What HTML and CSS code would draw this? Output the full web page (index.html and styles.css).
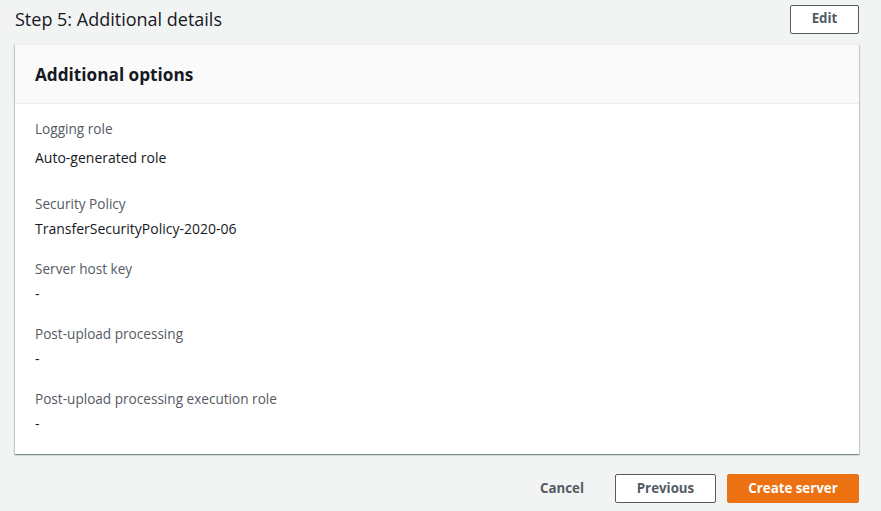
FILE: index.html
```html
<!DOCTYPE html>
<html>
<head>
<meta charset="utf-8">
<link rel="stylesheet" href="styles.css">
</head>
<body>
<div class="page">
  <div class="step-head">
    <h2 class="step-title">Step 5: Additional details</h2>
    <button class="btn btn-normal">Edit</button>
  </div>
  <div class="card">
    <div class="card-header"><h3>Additional options</h3></div>
    <div class="card-body">
      <div class="field first">
        <div class="label">Logging role</div>
        <div class="value v-first">Auto-generated role</div>
      </div>
      <div class="field second">
        <div class="label">Security Policy</div>
        <div class="value">TransferSecurityPolicy-2020-06</div>
      </div>
      <div class="field">
        <div class="label">Server host key</div>
        <div class="value">-</div>
      </div>
      <div class="field">
        <div class="label">Post-upload processing</div>
        <div class="value">-</div>
      </div>
      <div class="field">
        <div class="label">Post-upload processing execution role</div>
        <div class="value">-</div>
      </div>
    </div>
  </div>
  <div class="actions">
    <button class="btn btn-link">Cancel</button>
    <button class="btn btn-normal btn-prev">Previous</button>
    <button class="btn btn-primary">Create server</button>
  </div>
</div>
</body>
</html>
```
FILE: styles.css
```css
html, body {
  margin: 0;
  padding: 0;
  background: #f2f3f3;
  font-family: "Open Sans", "Noto Sans", sans-serif;
  color: #16191f;
}
.page {
  padding: 0 22px 0 15px;
}
.step-head {
  display: flex;
  justify-content: space-between;
  align-items: center;
  height: 38px;
}
.step-title {
  margin: 0;
  font-size: 18px;
  font-weight: 400;
  color: #16191f;
  line-height: 24px;
}
.btn {
  font-family: inherit;
  font-size: 13.3px;
  font-weight: 700;
  border-radius: 2px;
  cursor: pointer;
  height: 29px;
  box-sizing: border-box;
  line-height: 1;
}
.btn-normal {
  background: #fff;
  border: 1px solid #545b64;
  color: #545b64;
  padding: 0 20px;
}
.step-head .btn-normal {
  width: 69px;
  padding: 0;
}
.card {
  margin-top: 6px;
  background: #fff;
  box-shadow: 0 1px 1px 0 rgba(0,28,36,.3), 1px 1px 1px 0 rgba(0,28,36,.15), -1px 1px 1px 0 rgba(0,28,36,.15);
  border-top: 1px solid #eaeded;
}
.card-header {
  background: #fafafa;
  border-bottom: 1px solid #eaeded;
  height: 58px;
  display: flex;
  align-items: center;
  padding: 0 20px;
}
.card-header h3 {
  margin: 0;
  font-size: 17.2px;
  font-weight: 700;
  color: #16191f;
}
.card-body {
  padding: 9px 20px 20px;
}
.field {
  margin-top: 20px;
}
.field.first {
  margin-top: 6px;
}
.field.second {
  margin-top: 26px;
}
.label {
  font-size: 13.6px;
  color: #545b64;
  line-height: 20px;
}
.value {
  font-size: 14px;
  color: #16191f;
  line-height: 20px;
  margin-top: 5px;
}
.value.v-first {
  margin-top: 9px;
}
.actions {
  display: flex;
  justify-content: flex-end;
  align-items: center;
  gap: 11px;
  margin-top: 20px;
}
.btn-link {
  background: transparent;
  border: none;
  color: #545b64;
  padding: 0 20px;
}
.btn-prev {
  width: 101px;
  padding: 0;
}
.btn-primary {
  background: #ec7211;
  border: 1px solid #ec7211;
  color: #fff;
  width: 132px;
  padding: 0;
}
```
